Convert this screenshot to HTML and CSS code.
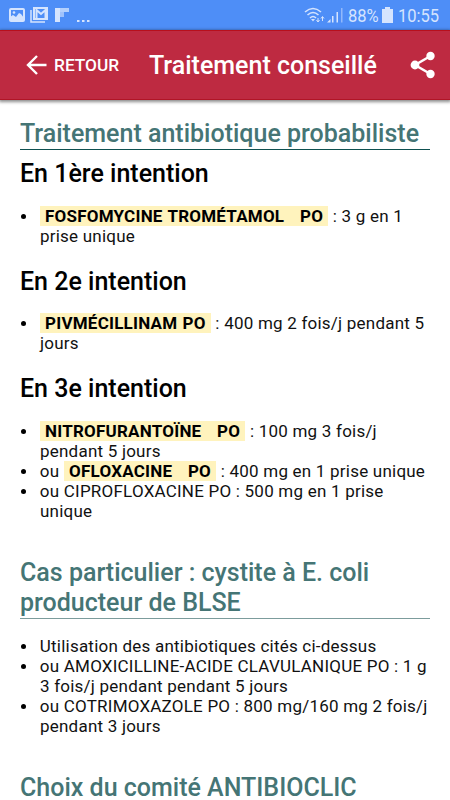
FILE: index.html
```html
<!DOCTYPE html>
<html lang="fr">
<head>
<meta charset="utf-8">
<title>Traitement conseillé</title>
<link rel="stylesheet" href="styles.css">
</head>
<body>
<div class="status">
<svg class="notif" width="94" height="30" viewBox="0 0 94 30">
<rect x="10" y="9" width="14" height="12" rx="1" fill="none" stroke="#d5e4fe" stroke-width="2"/>
<path d="M10 20v-3l3-2 3 2 3-4 2 1 3 4v3H10z" fill="#d5e4fe"/>
<circle cx="14" cy="12.500" r="1.300" fill="#d5e4fe"/>
<rect x="34" y="8" width="13" height="11" fill="none" stroke="#d5e4fe" stroke-width="2"/>
<path d="M36.500 18v-8l4.500 4 4.500-4v8" fill="none" stroke="#d5e4fe" stroke-width="2"/>
<path d="M31 10v12h14" fill="none" stroke="#d5e4fe" stroke-width="1.500"/>
<path d="M55 8h5v14h-5z" fill="#d5e4fe"/>
<path d="M60 8h9v4h-9z" fill="#b4d0fd"/>
<path d="M60 12h4v5h-4z" fill="#a0c2fc"/>
<path d="M77 20h2.500v2H77zM82 20h2.500v2H82zM87 20h2.500v2H87z" fill="#d5e4fe"/>
</svg>
<div class="right">
<svg width="44" height="30" viewBox="304 0 44 30">
<path d="M305 12q8-7 16 0M307.500 15q5.500-5 11 0M310 18q3-3 6 0" fill="none" stroke="#d5e4fe" stroke-width="1.600"/>
<path d="M311 19h4l-2 2.500z" fill="#d5e4fe"/>
<path d="M318 18v4M316.500 20l1.500 2 1.500-2M322.500 21v-4M321 18.500l1.500-2 1.500 2" fill="none" stroke="#d5e4fe"/>
<path d="M327 22.500l3.500-3.500v3.500zM332 16h1.500v6.500H332zM336.500 12h1.500v10.500h-1.500z" fill="#d5e4fe"/>
<path d="M341 8h1.500v14.500H341z" fill="#91b8fb"/>
</svg>
<span class="percent">88%</span>
<svg class="battery" width="11" height="16" viewBox="0 0 11 16"><path d="M3 0h5v2h3v14H0V2h3z" fill="#d5e4fe"/></svg>
<span class="time">10:55</span>
</div>
</div>
<div class="header">
<svg class="arrow" width="22" height="20" viewBox="0 0 22 20"><path d="M20.500 10H2M11 1L2 10l9 9" fill="none" stroke="#fff" stroke-width="2.400"/></svg>
<span class="back">RETOUR</span>
<span class="title">Traitement conseillé</span>
<svg class="share" width="26" height="28" viewBox="0 0 26 28"><path d="M20.500 5L5 14l15.500 9" fill="none" stroke="#fff" stroke-width="2.500"/><circle cx="20.500" cy="5" r="4.200" fill="#fff"/><circle cx="5" cy="14" r="4.400" fill="#fff"/><circle cx="20.500" cy="23" r="4.200" fill="#fff"/></svg>
</div>
<div class="content">
<h2>Traitement antibiotique probabiliste</h2>
<h3>En 1ère intention</h3>
<ul>
<li><b>&nbsp;FOSFOMYCINE TROMÉTAMOL &nbsp; PO&nbsp;</b> : 3 g en 1<br>prise unique</li>
</ul>
<h3>En 2e intention</h3>
<ul>
<li><b>&nbsp;PIVMÉCILLINAM PO&nbsp;</b> : 400 mg 2 fois/j pendant 5<br>jours</li>
</ul>
<h3>En 3e intention</h3>
<ul>
<li><b>&nbsp;NITROFURANTOÏNE &nbsp; PO&nbsp;</b> : 100 mg 3 fois/j<br>pendant 5 jours</li>
<li>ou <b>&nbsp;OFLOXACINE &nbsp; PO&nbsp;</b> : 400 mg en 1 prise unique</li>
<li>ou CIPROFLOXACINE PO : 500 mg en 1 prise<br>unique</li>
</ul>
<h2 class="case">Cas particulier : cystite à E. coli<br>producteur de BLSE</h2>
<ul>
<li>Utilisation des antibiotiques cités ci-dessus</li>
<li>ou AMOXICILLINE-ACIDE CLAVULANIQUE PO : 1 g<br>3 fois/j pendant pendant 5 jours</li>
<li>ou COTRIMOXAZOLE PO : 800 mg/160 mg 2 fois/j<br>pendant 3 jours</li>
</ul>
<h2 class="choice">Choix du comité ANTIBIOCLIC</h2>
</div>
</body>
</html>
```
FILE: styles.css
```css
body{
margin:0;
height:800px;
overflow:hidden;
background:#fff;
color:#111;
font-family:Roboto,sans-serif;
}
.status{
height:30px;
display:flex;
justify-content:space-between;
background:#4e8ef7;
color:#d5e4fe;
}
.right{
display:flex;
align-items:center;
padding-right:10px;
font-size:19px;
}
.percent,.time{
transform:scaleX(.87);
transform-origin:left;
white-space:nowrap;
}
.percent{
width:31px;
}
.battery{
margin:0 5px 0 3px;
}
.time{
width:42px;
}
.header{
height:70px;
display:flex;
align-items:center;
box-sizing:border-box;
padding:0 14px 0 26px;
border-top:1px solid #b80f1c;
border-bottom:1px solid #b01526;
background:#be2a41;
color:#fff;
box-shadow:0 1px 3px 1px rgba(0,0,0,.45);
}
.back{
width:66px;
margin-left:6px;
font-size:17.3px;
font-weight:500;
}
.title{
margin-left:29px;
font-size:25px;
font-weight:500;
}
.share{
margin-left:auto;
}
.content{
padding:19px 20px 0;
}
h2{
margin:0;
border-bottom:1px solid #0e5050;
color:#457575;
font-size:25px;
line-height:30px;
font-weight:500;
}
.case,.choice{
margin-top:37px;
}
.case{
border-color:#7c9c9c;
}
h3{
margin:0;
padding-top:9px;
color:#000;
font-size:25px;
line-height:30px;
font-weight:500;
}
ul{
margin:16.7px 0 12px;
padding-left:20px;
font-size:17px;
letter-spacing:.22px;
line-height:20px;
list-style:none;
}
li{
white-space:nowrap;
}
li::before{
content:"";
display:inline-block;
width:5px;
height:5px;
margin:0 14px 0 -19.2px;
border-radius:50%;
background:#000;
vertical-align:3px;
}
b{
background:#fff3bd;
color:#000;
word-spacing:.8px;
}
```
